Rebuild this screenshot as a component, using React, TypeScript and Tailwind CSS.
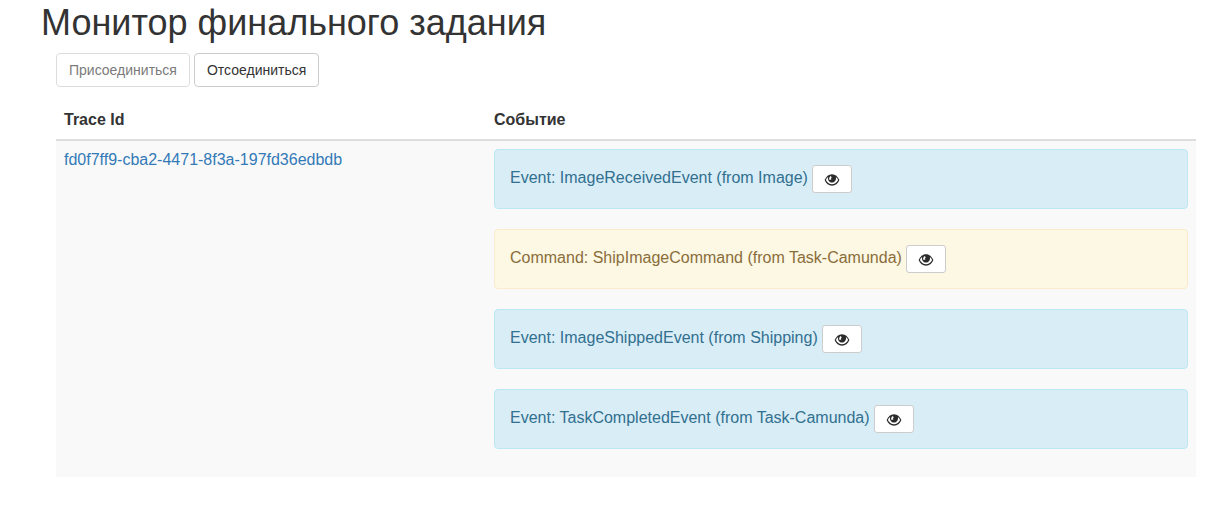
import React from "react";

type Kind = "event" | "command";

interface Message {
  kind: Kind;
  text: string;
}

interface Trace {
  id: string;
  messages: Message[];
}

const traces: Trace[] = [
  {
    id: "fd0f7ff9-cba2-4471-8f3a-197fd36edbdb",
    messages: [
      { kind: "event", text: "Event: ImageReceivedEvent (from Image)" },
      { kind: "command", text: "Command: ShipImageCommand (from Task-Camunda)" },
      { kind: "event", text: "Event: ImageShippedEvent (from Shipping)" },
      { kind: "event", text: "Event: TaskCompletedEvent (from Task-Camunda)" },
    ],
  },
];

const alertColors: Record<Kind, string> = {
  event: "border-[#bce8f1] bg-[#d9edf7] text-[#31708f]",
  command: "border-[#faebcc] bg-[#fcf8e3] text-[#8a6d3b]",
};

function EyeIcon() {
  return (
    <svg viewBox="0 0 16 12" className="h-3 w-4" aria-hidden="true">
      <path
        fillRule="evenodd"
        fill="#2b2b2b"
        d="M8 .2C4.600.2 2.200 2.400.600 6c1.600 3.600 4 5.700 7.400 5.700s5.800-2.100 7.400-5.700C13.800 2.400 11.400.2 8 .2ZM4.100 3C3.500 6 5.200 8.600 8 8.600s4.500-2.600 3.900-5.600C12.900 3.800 13.600 4.800 14.100 6c-1.300 2.700-3.400 4.200-6.100 4.200S3.200 8.700 1.900 6C2.400 4.800 3.100 3.800 4.100 3ZM6.800 1.900 7.800 3.600C7 4 6.900 4.600 7.300 5.500L5.500 6C4.800 4.200 5.300 2.600 6.800 1.900Z"
      />
    </svg>
  );
}

function MessageRow({ kind, text }: Message) {
  return (
    <div
      className={`flex flex-wrap items-start gap-1 rounded border p-[15px] ${alertColors[kind]}`}
    >
      <span className="py-0.5 leading-[22px]">{text}</span>
      <button
        type="button"
        aria-label="Показать"
        className="flex h-7 w-10 items-center justify-center rounded-[3px] border border-[#ccc] bg-white pt-[2px]"
      >
        <EyeIcon />
      </button>
    </div>
  );
}

export default function App() {
  return (
    <main className="px-[35px] pt-[3px] pb-8 font-['Liberation_Sans',Arial,sans-serif] text-base leading-[22px] text-[#333]">
      <h1 className="px-[6px] text-4xl leading-10">Монитор финального задания</h1>
      <div className="pl-[21px] pt-[10px]">
        <div className="flex gap-1 text-sm leading-5">
          <button
            type="button"
            disabled
            className="rounded border border-[#ccc] bg-white px-3 py-[6px] opacity-65"
          >
            Присоединиться
          </button>
          <button
            type="button"
            className="rounded border border-[#ccc] bg-white px-3 py-[6px]"
          >
            Отсоединиться
          </button>
        </div>
        <table className="mt-[14px] w-full border-collapse text-left">
          <thead>
            <tr className="border-b-2 border-[#ddd]">
              <th className="w-[430px] p-2 font-bold">Trace Id</th>
              <th className="p-2 font-bold">Событие</th>
            </tr>
          </thead>
          <tbody>
            {traces.map((trace) => (
              <tr key={trace.id} className="bg-[#f9f9f9]">
                <td className="p-2 align-top">
                  <a href={`#${trace.id}`} className="text-[#337ab7]">
                    {trace.id}
                  </a>
                </td>
                <td className="p-2 align-top">
                  <div className="flex flex-col gap-5 pb-5">
                    {trace.messages.map((message) => (
                      <MessageRow key={message.text} {...message} />
                    ))}
                  </div>
                </td>
              </tr>
            ))}
          </tbody>
        </table>
      </div>
    </main>
  );
}
